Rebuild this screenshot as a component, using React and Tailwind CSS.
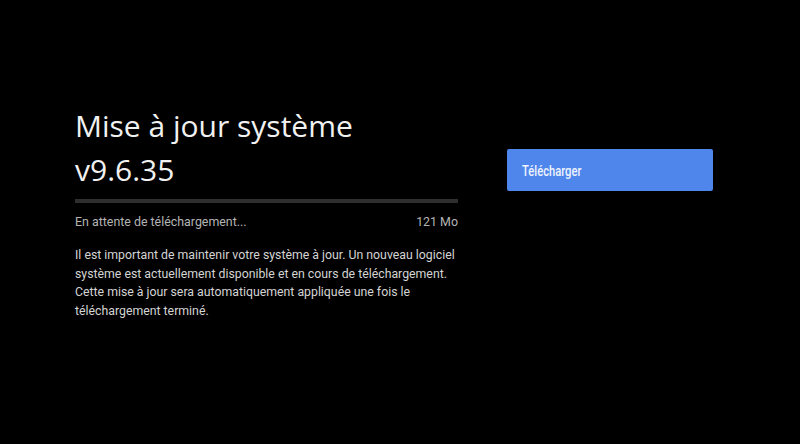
export default function App() {
  return (
    <div
      className="w-[800px] h-[444px] bg-black flex"
      style={{ fontFamily: "Roboto, 'Liberation Sans', sans-serif" }}
    >
      {/* left column */}
      <div className="w-[383px] ml-[75px] pt-[104px] flex flex-col">
        <h1
          className="text-[30px] leading-[44px] text-[#f1f1f1] font-normal"
          style={{ fontFamily: "'Open Sans', Roboto, sans-serif" }}
        >
          Mise à jour système
          <br />
          v9.6.35
        </h1>
        <div className="mt-[7px] h-[4px] w-full bg-[#2e2e2e]" />
        <div className="mt-[10px] flex justify-between text-[12.4px] leading-[18px] text-[#b4b4b4]">
          <span>En attente de téléchargement...</span>
          <span>121 Mo</span>
        </div>
        <p className="mt-[15px] text-[12.3px] leading-[18.7px] text-[#d4d4d4]">
          Il est important de maintenir votre système à jour. Un nouveau logiciel
          système est actuellement disponible et en cours de téléchargement.
          Cette mise à jour sera automatiquement appliquée une fois le
          téléchargement terminé.
        </p>
      </div>

      {/* right column */}
      <div className="ml-[49px] pt-[149px]">
        <button className="w-[206px] h-[42px] rounded-[2px] bg-[#4f86ec] text-left pl-[15px] text-[14px] font-medium text-[#eef3fd]">
          <span className="inline-block origin-left scale-x-[0.8] translate-y-[1px]">Télécharger</span>
        </button>
      </div>
    </div>
  );
}
